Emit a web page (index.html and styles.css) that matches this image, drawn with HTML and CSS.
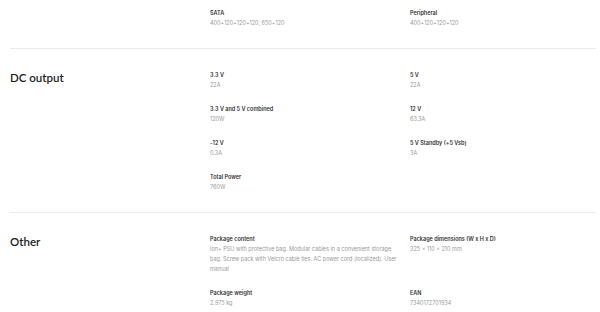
FILE: index.html
```html
<!DOCTYPE html>
<html lang="en">
<head>
    <meta charset="UTF-8">
    <meta name="viewport" content="width=device-width, initial-scale=1.0">
    <title>Specifications</title>
    <link rel="stylesheet" href="styles.css">
</head>
<body>
    <div class="specs">
        <div class="spec-section first">
            <h2 class="spec-title"></h2>
            <div class="spec-grid">
                <div class="spec-item">
                    <div class="spec-label">SATA</div>
                    <div class="spec-value">400+120+120+120, 650+120</div>
                </div>
                <div class="spec-item">
                    <div class="spec-label">Peripheral</div>
                    <div class="spec-value">400+120+120+120</div>
                </div>
            </div>
        </div>

        <div class="spec-section">
            <h2 class="spec-title">DC output</h2>
            <div class="spec-grid">
                <div class="spec-item">
                    <div class="spec-label">3.3 V</div>
                    <div class="spec-value">22A</div>
                </div>
                <div class="spec-item">
                    <div class="spec-label">5 V</div>
                    <div class="spec-value">22A</div>
                </div>
                <div class="spec-item">
                    <div class="spec-label">3.3 V and 5 V combined</div>
                    <div class="spec-value">120W</div>
                </div>
                <div class="spec-item">
                    <div class="spec-label">12 V</div>
                    <div class="spec-value">63.3A</div>
                </div>
                <div class="spec-item">
                    <div class="spec-label">-12 V</div>
                    <div class="spec-value">0.3A</div>
                </div>
                <div class="spec-item">
                    <div class="spec-label">5 V Standby (+5 Vsb)</div>
                    <div class="spec-value">3A</div>
                </div>
                <div class="spec-item">
                    <div class="spec-label">Total Power</div>
                    <div class="spec-value">760W</div>
                </div>
            </div>
        </div>

        <div class="spec-section last">
            <h2 class="spec-title">Other</h2>
            <div class="spec-grid">
                <div class="spec-item">
                    <div class="spec-label">Package content</div>
                    <div class="spec-value">Ion+ PSU with protective bag. Modular cables in a convenient storage bag. Screw pack with Velcro cable ties. AC power cord (localized). User manual</div>
                </div>
                <div class="spec-item">
                    <div class="spec-label">Package dimensions (W x H x D)</div>
                    <div class="spec-value">325 x 110 x 210 mm</div>
                </div>
                <div class="spec-item">
                    <div class="spec-label">Package weight</div>
                    <div class="spec-value">2.975 kg</div>
                </div>
                <div class="spec-item">
                    <div class="spec-label">EAN</div>
                    <div class="spec-value">7340172701934</div>
                </div>
            </div>
        </div>
    </div>
</body>
</html>
```

FILE: styles.css
```css
body {
    margin: 0;
    background: #fff;
    font-family: Inter, "Noto Sans", sans-serif;
    color: #222;
}
.specs {
    padding: 0 4px 0 10px;
}
.spec-section {
    display: grid;
    grid-template-columns: 200px 1fr;
    padding: 21px 0 20px;
    border-bottom: 1px solid #ececec;
}
.spec-section.first {
    padding-top: 8px;
}
.spec-section.last {
    padding-bottom: 0;
    border-bottom: none;
}
.spec-title {
    margin: 0;
    font-family: Lato, "Noto Sans", sans-serif;
    font-size: 11.5px;
    line-height: 16px;
    font-weight: 600;
    color: #1e1e1e;
}
.spec-grid {
    display: grid;
    grid-template-columns: 200px 186px;
    row-gap: 14px;
}
.spec-item {
    padding-right: 8px;
}
.spec-label {
    font-size: 5.5px;
    line-height: 10px;
    font-weight: 600;
    color: #333;
}
.spec-value {
    font-size: 5.5px;
    line-height: 10px;
    color: #9a9a9a;
}
```
